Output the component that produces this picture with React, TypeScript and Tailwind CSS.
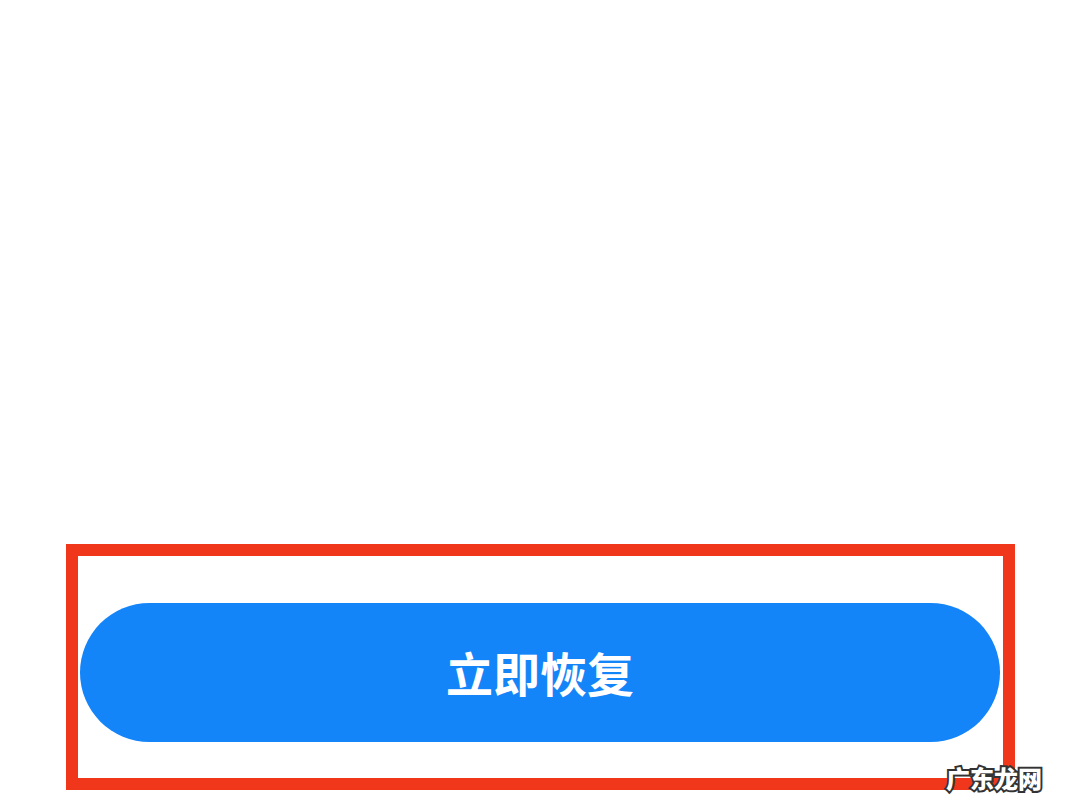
import React from "react";

export default function App() {
  return (
    <div className="relative w-[1080px] h-[810px] bg-white overflow-hidden font-['Noto_Sans_CJK_SC',sans-serif]">
      <div className="pt-[544px] pl-[66px]">
        <div className="w-[949px] h-[246px] border-[12px] border-[#f0371b] pt-[47px] pl-[2px] pr-[3px] pb-[36px] box-border">
          <div className="w-full h-[139px] rounded-full bg-[#1484f9] flex items-center justify-center">
            <span className="text-white text-[47px] font-semibold leading-none -mt-[3px]">立即恢复</span>
          </div>
        </div>
      </div>
      <div className="absolute left-[946px] top-[766px] text-white text-[24px] font-black leading-none [-webkit-text-stroke:4px_#333] [paint-order:stroke_fill]">
        广东龙网
      </div>
    </div>
  );
}
